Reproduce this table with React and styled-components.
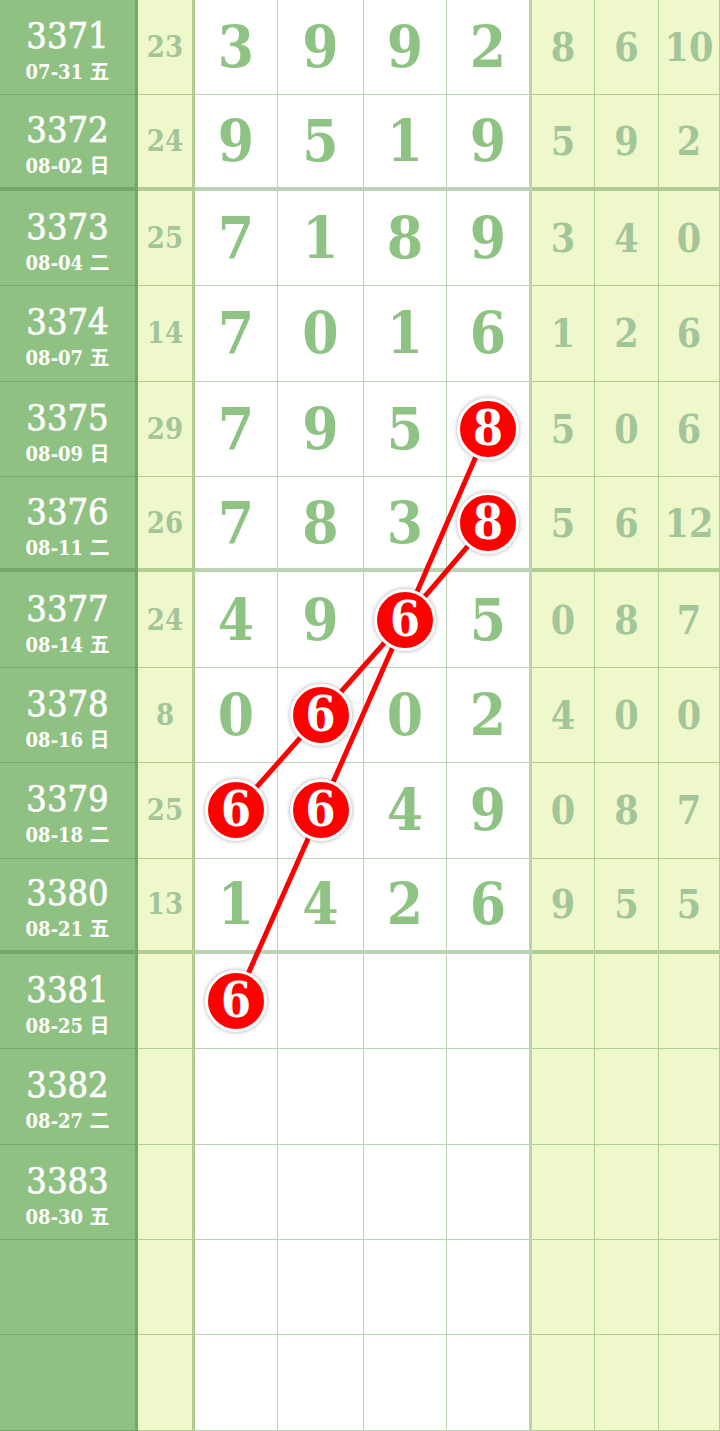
import React from "react"
import styled, {createGlobalStyle} from "styled-components"

const
  ROW_H = 95.4,
  COLS = "138px 57px 83px 86px 83px 85px 63px 64px 61px",
  MAIN_X = [236, 320.5, 405, 488],
  LINE = "rgba(70, 130, 50, 0.36)",
  SERIF = `"DejaVu Serif", "Liberation Serif", "Noto Sans CJK SC", serif`

const rows = [
  {no: 3371, date: "07-31 五", sum: 23, main: [3, 9, 9, 2], tail: [8, 6, 10]},
  {no: 3372, date: "08-02 日", sum: 24, main: [9, 5, 1, 9], tail: [5, 9, 2]},
  {no: 3373, date: "08-04 二", sum: 25, main: [7, 1, 8, 9], tail: [3, 4, 0]},
  {no: 3374, date: "08-07 五", sum: 14, main: [7, 0, 1, 6], tail: [1, 2, 6]},
  {no: 3375, date: "08-09 日", sum: 29, main: [7, 9, 5, 8], tail: [5, 0, 6], hit: [3]},
  {no: 3376, date: "08-11 二", sum: 26, main: [7, 8, 3, 8], tail: [5, 6, 12], hit: [3]},
  {no: 3377, date: "08-14 五", sum: 24, main: [4, 9, 6, 5], tail: [0, 8, 7], hit: [2]},
  {no: 3378, date: "08-16 日", sum: 8, main: [0, 6, 0, 2], tail: [4, 0, 0], hit: [1]},
  {no: 3379, date: "08-18 二", sum: 25, main: [6, 6, 4, 9], tail: [0, 8, 7], hit: [0, 1]},
  {no: 3380, date: "08-21 五", sum: 13, main: [1, 4, 2, 6], tail: [9, 5, 5]},
  {no: 3381, date: "08-25 日", main: [6, "", "", ""], tail: ["", "", ""], hit: [0]},
  {no: 3382, date: "08-27 二", main: ["", "", "", ""], tail: ["", "", ""]},
  {no: 3383, date: "08-30 五", main: ["", "", "", ""], tail: ["", "", ""]},
  {main: ["", "", "", ""], tail: ["", "", ""]},
  {main: ["", "", "", ""], tail: ["", "", ""]},
]

const thickAfter = [1, 5, 9]

// [row, col] pairs joined by red lines
const chains = [
  [[4, 3], [6, 2], [8, 1], [10, 0]],
  [[5, 3], [6, 2], [7, 1], [8, 0]],
]

const
  Global = createGlobalStyle`
    html, body { margin: 0; padding: 0; background: #fff; }
    body { width: 720px; overflow: hidden; }
  `,
  Board = styled.div`
    position: relative;
    width: 720px;
    height: 1431px;
    overflow: hidden;
    font-family: ${SERIF};
  `,
  Row = styled.div`
    display: grid;
    grid-template-columns: ${COLS};
    height: ${ROW_H}px;
  `,
  Cell = styled.div`
    box-sizing: border-box;
    display: flex;
    align-items: center;
    justify-content: center;
    border-bottom: ${props => props.$thick ? 4 : 1}px solid ${LINE};
    border-right: ${props => props.$edge || 1}px solid ${LINE};
    background: ${props => props.$bg || "#fff"};
    font-weight: bold;
    font-stretch: semi-condensed;
  `,
  Head = styled(Cell)`
    flex-direction: column;
    gap: 6px;
    background: #8fc183;
    border-right: 3px solid rgba(60, 110, 45, 0.3);
    border-bottom-color: rgba(60, 110, 45, 0.3);
    color: #fff;
    padding-top: 6px;
  `,
  Issue = styled.span`
    font-size: 36px;
    line-height: 38px;
    font-weight: normal;
    -webkit-text-stroke: 0.7px #fff;
  `,
  Day = styled.span`
    font-size: 20px;
    line-height: 22px;
    font-weight: bold;
    font-family: "DejaVu Serif", "Noto Sans CJK SC", serif;
  `,
  Sum = styled(Cell)`
    background: #eff8cb;
    color: #a3c59a;
    font-size: 29px;
  `,
  Digit = styled(Cell)`
    color: #8fc383;
    font-size: 58px;
  `,
  Tail = styled(Cell)`
    background: #eff8cb;
    color: #a3c59a;
    font-size: 39px;
  `,
  Ball = styled.span`
    position: relative;
    z-index: 2;
    box-sizing: border-box;
    width: 62px;
    height: 62px;
    border-radius: 50%;
    background: #ff0000;
    border: 3px solid #fff;
    box-shadow: 0 0 4px rgba(0, 0, 0, 0.35);
    color: #fff;
    font-size: 48px;
    line-height: 54px;
    text-align: center;
  `,
  Links = styled.svg`
    position: absolute;
    left: 0;
    top: 0;
    z-index: 1;
    pointer-events: none;
  `

const center = ([r, c]) => [MAIN_X[c], r * ROW_H + (ROW_H - (thickAfter.includes(r) ? 4 : 1)) / 2]

export default function App() {
  return <Board>
    <Global />
    {rows.map((row, i) => {
      const thick = thickAfter.includes(i)
      return <Row key={i}>
        <Head $thick={thick}>
          {row.no && <Issue>{row.no}</Issue>}
          {row.date && <Day>{row.date}</Day>}
        </Head>
        <Sum $thick={thick} $edge={3}>{row.sum}</Sum>
        {row.main.map((d, j) => <Digit key={j} $thick={thick} $edge={j === 3 ? 3 : 1}>
          {row.hit && row.hit.includes(j) ? <Ball>{d}</Ball> : d}
        </Digit>)}
        {row.tail.map((d, j) => <Tail key={j} $thick={thick} $edge={j === 2 ? 0.001 : 1}>{d}</Tail>)}
      </Row>
    })}
    <Links width="720" height="1431" viewBox="0 0 720 1431">
      {chains.map((chain, k) => <polyline key={k}
        points={chain.map(p => center(p).join(",")).join(" ")}
        fill="none" stroke="#ff0000" strokeWidth="5" />)}
    </Links>
  </Board>
}
